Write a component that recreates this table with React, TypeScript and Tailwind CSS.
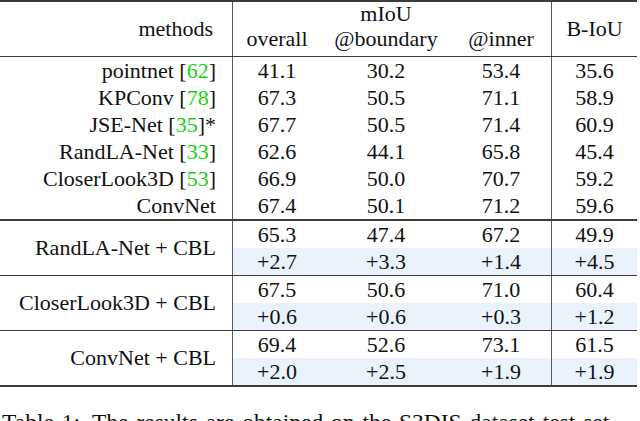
import React from "react";

const cols = "grid grid-cols-[233px_88px_130px_101px_85px]";
const line = "border-[#3c3c3c]";
const vline = "border-r border-[#5a5a5a]";

type Method = { name: string; cite?: string; star?: boolean; v: string[] };

const base: Method[] = [
  { name: "pointnet", cite: "62", v: ["41.1", "30.2", "53.4", "35.6"] },
  { name: "KPConv", cite: "78", v: ["67.3", "50.5", "71.1", "58.9"] },
  { name: "JSE-Net", cite: "35", star: true, v: ["67.7", "50.5", "71.4", "60.9"] },
  { name: "RandLA-Net", cite: "33", v: ["62.6", "44.1", "65.8", "45.4"] },
  { name: "CloserLook3D", cite: "53", v: ["66.9", "50.0", "70.7", "59.2"] },
  { name: "ConvNet", v: ["67.4", "50.1", "71.2", "59.6"] },
];

const cbl = [
  { name: "RandLA-Net + CBL", v: ["65.3", "47.4", "67.2", "49.9"], d: ["+2.7", "+3.3", "+1.4", "+4.5"] },
  { name: "CloserLook3D + CBL", v: ["67.5", "50.6", "71.0", "60.4"], d: ["+0.6", "+0.6", "+0.3", "+1.2"] },
  { name: "ConvNet + CBL", v: ["69.4", "52.6", "73.1", "61.5"], d: ["+2.0", "+2.5", "+1.9", "+1.9"] },
];

function Values({ v, blue }: { v: string[]; blue?: boolean }) {
  const bg = blue ? "bg-[#e9f2fd]" : "";
  return (
    <>
      <div className={`h-[27px] flex items-center justify-center ${bg}`}>{v[0]}</div>
      <div className={`h-[27px] flex items-center justify-center ${bg}`}>{v[1]}</div>
      <div className={`h-[27px] flex items-center justify-center ${vline} ${bg}`}>{v[2]}</div>
      <div className={`h-[27px] flex items-center justify-center ${bg}`}>{v[3]}</div>
    </>
  );
}

export default function App() {
  return (
    <div className="w-[640px] h-[421px] overflow-hidden bg-white text-[#111] font-['Liberation_Serif','Times_New_Roman',serif]">
      <div className={`w-[637px] text-[22px] leading-none border-t-2 border-b-2 ${line}`}>
        {/* header */}
        <div className={`${cols} border-b ${line}`}>
          <div className={`row-span-2 ${vline} flex items-center justify-end pr-[19px] pb-[1px]`}>methods</div>
          <div className="h-[27px]" />
          <div className="h-[27px] flex items-center justify-center pb-[4px]">mIoU</div>
          <div className={`h-[27px] ${vline}`} />
          <div className="row-span-2 flex items-center justify-center">B-IoU</div>
          <div className="h-[27px] flex items-end justify-center pb-[6px]">overall</div>
          <div className="h-[27px] flex items-end justify-center pb-[6px]">@boundary</div>
          <div className={`h-[27px] flex items-end justify-center pb-[6px] ${vline}`}>@inner</div>
        </div>

        {/* baselines */}
        <div className={`border-b-2 ${line}`}>
          {base.map((m) => (
            <div key={m.name} className={cols}>
              <div className={`h-[27px] flex items-center justify-end pr-[16px] ${vline}`}>
                <span>
                  {m.name}
                  {m.cite && (
                    <>
                      {" "}[<span className="text-[#17d117]">{m.cite}</span>]
                    </>
                  )}
                  {m.star && "*"}
                </span>
              </div>
              <Values v={m.v} />
            </div>
          ))}
        </div>

        {/* with CBL */}
        {cbl.map((g, i) => (
          <div
            key={g.name}
            className={`${cols} ${i < cbl.length - 1 ? `border-b ${line}` : ""}`}
          >
            <div className={`row-span-2 flex items-center justify-end pr-[16px] ${vline}`}>{g.name}</div>
            <Values v={g.v} />
            <Values v={g.d} blue />
          </div>
        ))}
      </div>

      <p className="mt-[21px] pl-[2px] text-[23.5px] leading-[28px] whitespace-nowrap [word-spacing:2px]">
        Table 1:<span className="inline-block w-[12px]" />The results are obtained on the S3DIS dataset test set
      </p>
    </div>
  );
}
